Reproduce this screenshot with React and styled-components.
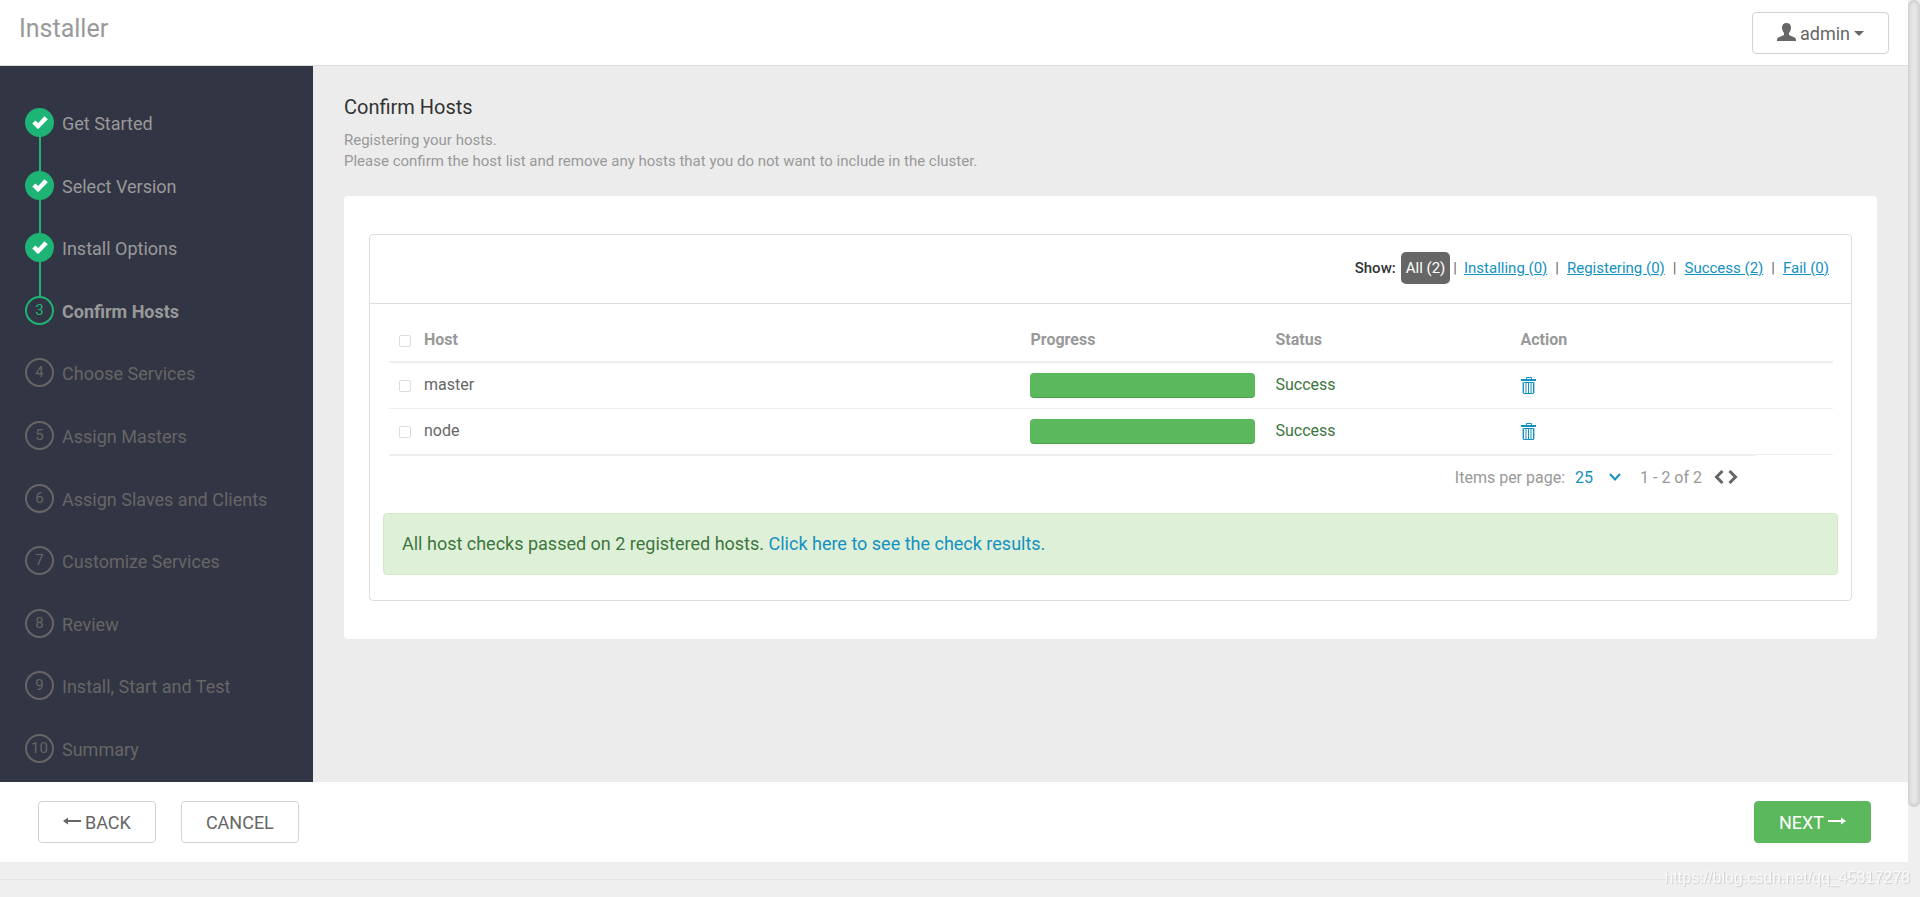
import React from "react";
import styled, { createGlobalStyle } from "styled-components";

const GlobalStyle = createGlobalStyle`
  * { box-sizing: border-box; }
  body {
    margin: 0;
    background: #efefef;
    color: #666;
    font-family: Roboto, "Liberation Sans", sans-serif;
    font-size: 18px;
  }
  a { color: #1491c1; text-decoration: none; }
`;

const Window = styled.div`
  display: flex;
  min-height: 100vh;
`;

const Page = styled.div`
  display: flex;
  flex-direction: column;
  flex: 1;
`;

const Header = styled.header`
  display: flex;
  justify-content: space-between;
  align-items: flex-start;
  height: 66px;
  padding: 12px 19px;
  background: #fff;
  border-bottom: 1px solid #ddd;
`;

const Brand = styled.div`
  color: #999;
  font-size: 25px;
  line-height: 34px;
`;

const Button = styled.button`
  display: flex;
  align-items: center;
  justify-content: center;
  gap: 4px;
  height: 42px;
  padding: 1px 24px 0;
  border: 1px solid ${p => (p.$primary ? "#5cb85c" : "#cfd3d7")};
  border-radius: 4px;
  background: ${p => (p.$primary ? "#5cb85c" : "#fff")};
  color: ${p => (p.$primary ? "#fff" : "#666")};
  font: inherit;
  line-height: 24px;

  svg { margin-bottom: 3px; }
`;

const Caret = styled.span`
  border: 5px solid transparent;
  border-top-color: #666;
  border-bottom-width: 0;
`;

const Body = styled.div`
  display: flex;
  flex: 1;
`;

const Sidebar = styled.nav`
  display: flex;
  width: 313px;
  padding: 42px 25px 19px;
  background: #323544;
`;

const Steps = styled.ol`
  display: flex;
  flex-direction: column;
  flex: 1;
  margin: 0;
  padding: 0;
  list-style: none;
`;

const Step = styled.li`
  display: flex;
  gap: 8px;
  height: 29px;
  line-height: 31px;
  color: ${p => (p.$state === "todo" ? "#666" : "#999")};
  font-weight: ${p => (p.$state === "current" ? 700 : 400)};

  &:not(:last-child) {
    flex: 1;
  }
`;

const Rail = styled.div`
  display: flex;
  flex-direction: column;
  align-items: center;

  &::after {
    content: "";
    flex: 1;
    width: 2px;
    background: ${p => (p.$done ? "#1eb475" : "transparent")};
  }
`;

const Marker = styled.span`
  display: flex;
  align-items: center;
  justify-content: center;
  width: 29px;
  height: 29px;
  border: 2px solid ${p => (p.$state === "todo" ? "#666" : "#1eb475")};
  border-radius: 50%;
  background: ${p => (p.$state === "done" ? "#1eb475" : "transparent")};
  color: ${p => (p.$state === "todo" ? "#666" : "#1eb475")};
  font-size: 15px;
  font-weight: 400;
`;

const Main = styled.main`
  flex: 1;
  padding: 30px 31px;
  background: #ececec;
`;

const Title = styled.h4`
  margin: 0;
  color: #333;
  font-size: 20px;
  font-weight: 400;
  line-height: 22px;
`;

const Description = styled.p`
  margin: 12px 0 24px;
  color: #999;
  font-size: 15px;
  line-height: 21px;
`;

const Card = styled.section`
  padding: 38px 25px;
  border-radius: 4px;
  background: #fff;
`;

const Panel = styled.div`
  border: 1px solid #ddd;
  border-radius: 4px;
`;

const Filters = styled.div`
  display: flex;
  align-items: center;
  justify-content: flex-end;
  height: 69px;
  padding: 0 22px 3px;
  border-bottom: 1px solid #ddd;
  font-size: 15px;

  a { text-decoration: underline; }
  strong { margin-right: 5px; color: #333; font-weight: 500; }
`;

const ActiveFilter = styled.span`
  padding: 0 5px;
  border-radius: 5px;
  background: #666;
  color: #fff;
  line-height: 32px;
`;

const Divider = styled.span`
  margin: 0 ${p => (p.$first ? "7px 0 3px" : "8px")};
`;

const Hosts = styled.div`
  padding: 15px 18px 0 19px;
`;

const Table = styled.table`
  width: 100%;
  table-layout: fixed;
  border-collapse: collapse;
  font-size: 16px;
  text-align: left;

  th, td { height: 46px; padding: 0 10px; line-height: 22px; }
  th { height: 43px; border-bottom: 2px solid #eee; color: #999; font-weight: 700; }
  td { border-bottom: 1px solid #eee; }
`;

const Col = styled.col`
  width: ${p => p.$w};
`;

const Checkbox = styled.input`
  display: block;
  appearance: none;
  width: 12px;
  height: 12px;
  margin: 2px 0 0;
  border: 1px solid #ddd;
  border-radius: 2px;
  background: #fff;
`;

const Progress = styled.div`
  height: 25px;
  border-radius: 4px;
  background: #5cb85c;
  box-shadow: inset 0 -1px 0 rgba(0, 0, 0, 0.15);
`;

const Success = styled.span`
  color: #3c763d;
`;

const IconButton = styled.button`
  display: block;
  padding: 0;
  border: 0;
  background: none;
  color: ${p => (p.$link ? "#1491c1" : "#666")};

  svg { display: block; }
`;

const Pagination = styled.div`
  display: flex;
  align-items: center;
  justify-content: flex-end;
  height: 45px;
  margin: -1px 78px 0 0;
  padding: 0 17px;
  border-top: 2px solid #eee;
  color: #999;
  font-size: 16px;
`;

const PageSize = styled.label`
  display: flex;
  align-items: center;
  gap: 10px;
  margin-right: 19px;
`;

const SelectBox = styled.span`
  display: grid;
  align-items: center;
  width: 46px;
  color: #1491c1;

  select, svg { grid-area: 1 / 1; }
  svg { justify-self: end; pointer-events: none; }
`;

const Select = styled.select`
  appearance: none;
  padding: 0;
  border: 0;
  background: none;
  color: inherit;
  font: inherit;
`;

const Pager = styled.div`
  display: flex;
  gap: 4px;
  margin-left: 12px;
`;

const Alert = styled.div`
  margin: 14px 13px 25px;
  padding: 18px;
  border: 1px solid #d0e9c6;
  border-radius: 4px;
  background: #dff0d8;
  color: #3c763d;
  line-height: 24px;
`;

const Footer = styled.footer`
  display: flex;
  gap: 25px;
  padding: 19px 37px 19px 38px;
  background: #fff;
`;

const Spacer = styled.span`
  flex: 1;
`;

const Bottom = styled.div`
  height: 35px;
  padding-top: 17px;

  &::before {
    content: "";
    display: block;
    border-top: 1px solid #e3e3e3;
  }
`;

const Scrollbar = styled.div`
  width: 12px;
  background: #efefef;
`;

const Thumb = styled.div`
  height: 90%;
  border-radius: 6px;
  background: #e6e6e6;
  box-shadow: inset 0 0 5px rgba(0, 0, 0, 0.2);
`;

const Watermark = styled.span`
  position: fixed;
  right: 10px;
  bottom: 9px;
  color: #fafafa;
  font: 16px/20px "Liberation Sans", Arial, sans-serif;
  text-shadow: 1px 1px 1px #ccc;
`;

const UserIcon = () => (
  <svg width="19" height="18" viewBox="0 0 19 18" fill="currentColor">
    <path d="M9.500 0C12.400 0 14 1.900 14 4.600C14 6.700 13.300 8.700 12 9.900V12L17.600 14.600C18.500 15.100 19 15.900 19 18H0C0 15.900.500 15.100 1.400 14.600L7 12V9.900C5.700 8.700 5 6.700 5 4.600C5 1.900 6.600 0 9.500 0Z" />
  </svg>
);

const CheckIcon = () => (
  <svg width="16" height="13" viewBox="0 0 16 13" fill="#fff">
    <path d="M12.400.200L15.800 3.200L7 12.200C6.400 12.900 5.600 12.900 5 12.200L.300 7.500L3.400 4.500L6.200 6.900Z" />
  </svg>
);

const TrashIcon = () => (
  <svg width="16" height="17" viewBox="0 0 16 17" fill="none" stroke="currentColor">
    <path d="M6.500 2V.500H11.500V2" />
    <path d="M1 3H16" strokeWidth="2" />
    <path d="M3.500 5.500H13.500V16.500H3.500Z" />
    <path d="M2.500 5V16" strokeOpacity="0.400" />
    <path d="M14.500 5V16" strokeOpacity="0.400" />
    <path d="M6 5V17M8.500 5V17M11 5V17" />
  </svg>
);

const ArrowIcon = ({ right }) => (
  <svg width="18" height="8" viewBox="0 0 18 8" fill="currentColor">
    <path d={right ? "M0 3H13V.500L18 4L13 7.500V5H0Z" : "M18 3H5V.500L0 4L5 7.500V5H18Z"} />
  </svg>
);

const ChevronIcon = ({ right }) => (
  <svg width="10" height="14" viewBox="0 0 10 14" fill="none" stroke="currentColor" strokeWidth="3">
    <path d={right ? "M1.500 1L7.500 7L1.500 13" : "M8.500 1L2.500 7L8.500 13"} />
  </svg>
);

const DownIcon = () => (
  <svg width="12" height="8" viewBox="0 0 12 8" fill="none" stroke="currentColor" strokeWidth="2">
    <path d="M1 1L6 6.500L11 1" />
  </svg>
);

const steps = [
  "Get Started",
  "Select Version",
  "Install Options",
  "Confirm Hosts",
  "Choose Services",
  "Assign Masters",
  "Assign Slaves and Clients",
  "Customize Services",
  "Review",
  "Install, Start and Test",
  "Summary",
];

const currentStep = 3;

const filters = ["Installing (0)", "Registering (0)", "Success (2)", "Fail (0)"];

const hosts = ["master", "node"];

const stepState = i => (i < currentStep ? "done" : i === currentStep ? "current" : "todo");

export default () => (
  <Window>
    <GlobalStyle />
    <Page>
      <Header>
        <Brand>Installer</Brand>
        <Button type="button">
          <UserIcon />
          admin
          <Caret />
        </Button>
      </Header>

      <Body>
        <Sidebar>
          <Steps>
            {steps.map((name, i) => (
              <Step key={name} $state={stepState(i)}>
                <Rail $done={i < currentStep}>
                  <Marker $state={stepState(i)}>{i < currentStep ? <CheckIcon /> : i}</Marker>
                </Rail>
                {name}
              </Step>
            ))}
          </Steps>
        </Sidebar>

        <Main>
          <Title>Confirm Hosts</Title>
          <Description>
            Registering your hosts.
            <br />
            Please confirm the host list and remove any hosts that you do not want to include in the cluster.
          </Description>

          <Card>
            <Panel>
              <Filters>
                <strong>Show:</strong>
                <ActiveFilter>All (2)</ActiveFilter>
                {filters.map((label, i) => (
                  <React.Fragment key={label}>
                    <Divider $first={i === 0}>|</Divider>
                    <a href="#filter">{label}</a>
                  </React.Fragment>
                ))}
              </Filters>

              <Hosts>
                <Table>
                  <colgroup>
                    <Col $w="25px" />
                    <Col $w="42%" />
                    <Col $w="245px" />
                    <Col $w="245px" />
                    <Col />
                  </colgroup>
                  <thead>
                    <tr>
                      <th><Checkbox type="checkbox" aria-label="Select all hosts" /></th>
                      <th>Host</th>
                      <th>Progress</th>
                      <th>Status</th>
                      <th>Action</th>
                    </tr>
                  </thead>
                  <tbody>
                    {hosts.map(host => (
                      <tr key={host}>
                        <td><Checkbox type="checkbox" aria-label={host} /></td>
                        <td>{host}</td>
                        <td><Progress /></td>
                        <td><Success>Success</Success></td>
                        <td>
                          <IconButton type="button" $link aria-label={`Remove ${host}`}>
                            <TrashIcon />
                          </IconButton>
                        </td>
                      </tr>
                    ))}
                  </tbody>
                </Table>

                <Pagination>
                  <PageSize>
                    Items per page:
                    <SelectBox>
                      <Select defaultValue="25">
                        <option>10</option>
                        <option>25</option>
                        <option>50</option>
                      </Select>
                      <DownIcon />
                    </SelectBox>
                  </PageSize>
                  1 - 2 of 2
                  <Pager>
                    <IconButton type="button" aria-label="Previous page"><ChevronIcon /></IconButton>
                    <IconButton type="button" aria-label="Next page"><ChevronIcon right /></IconButton>
                  </Pager>
                </Pagination>
              </Hosts>

              <Alert>
                All host checks passed on 2 registered hosts.{" "}
                <a href="#checks">Click here to see the check results.</a>
              </Alert>
            </Panel>
          </Card>
        </Main>
      </Body>

      <Footer>
        <Button type="button"><ArrowIcon />BACK</Button>
        <Button type="button">CANCEL</Button>
        <Spacer />
        <Button type="button" $primary>NEXT<ArrowIcon right /></Button>
      </Footer>
      <Bottom />
    </Page>
    <Scrollbar>
      <Thumb />
    </Scrollbar>
    <Watermark>https://blog.csdn.net/qq_45317278</Watermark>
  </Window>
);
